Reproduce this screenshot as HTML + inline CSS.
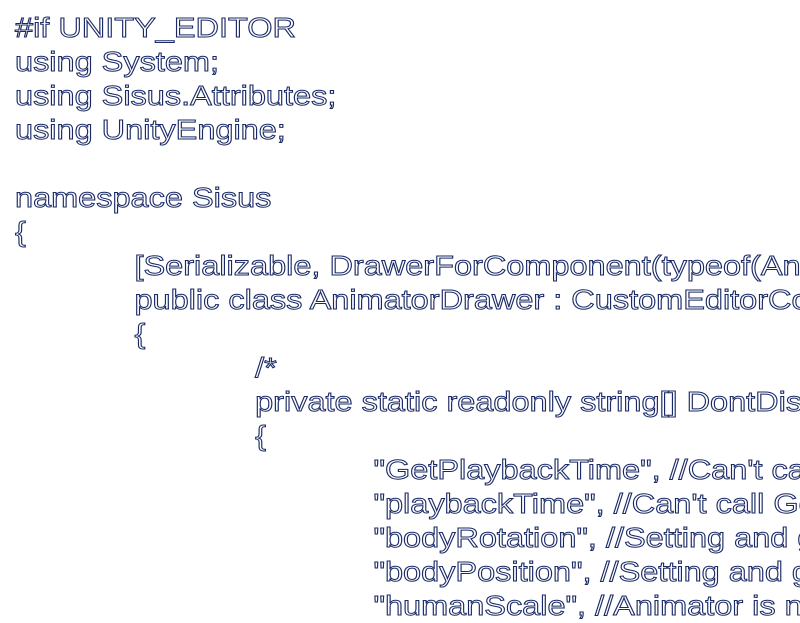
<!DOCTYPE html>
<html><head><meta charset="utf-8"><style>
html,body{margin:0;padding:0;background:#fff;width:800px;height:600px;overflow:hidden}
.c{position:absolute;left:15px;top:11px;font-family:"Liberation Sans",sans-serif;font-size:28px;line-height:34px;color:#fff;-webkit-text-stroke:1px #1a2a66;transform:scaleX(1.16);transform-origin:0 0;width:1000px}
.l{height:34px;white-space:pre}
.i1{padding-left:103px}.i2{padding-left:207px}.i3{padding-left:309px}
</style></head><body>
<div class="c"><div class="l">#if UNITY_EDITOR</div><div class="l">using System;</div><div class="l">using Sisus.Attributes;</div><div class="l">using UnityEngine;</div><div class="l"></div><div class="l">namespace Sisus</div><div class="l">{</div><div class="l i1">[Serializable, DrawerForComponent(typeof(Animator))]</div><div class="l i1">public class AnimatorDrawer : CustomEditorComponentDrawer</div><div class="l i1">{</div><div class="l i2">/*</div><div class="l i2">private static readonly string[] DontDisplay =</div><div class="l i2">{</div><div class="l i3">"GetPlaybackTime", //Can't call</div><div class="l i3">"playbackTime", //Can't call Get</div><div class="l i3">"bodyRotation", //Setting and get</div><div class="l i3">"bodyPosition", //Setting and get</div><div class="l i3">"humanScale", //Animator is not</div></div>
</body></html>
